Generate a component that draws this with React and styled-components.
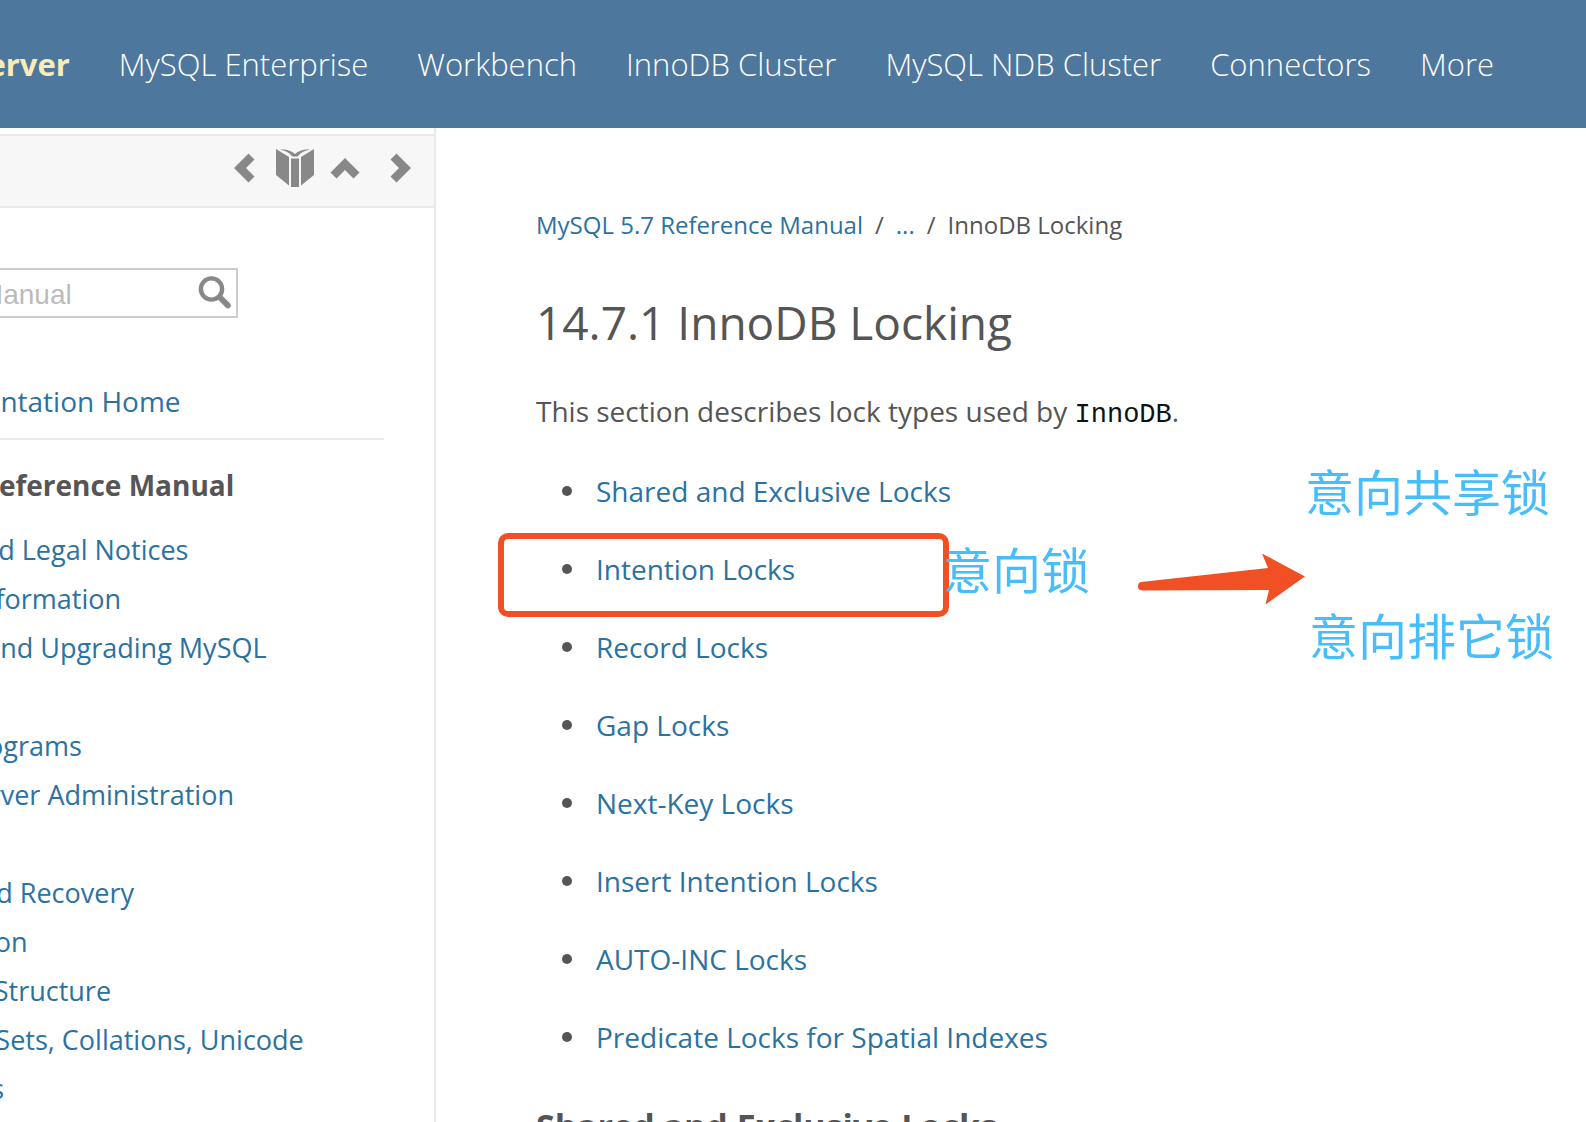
import React from 'react';
import styled, { createGlobalStyle } from 'styled-components';

const GlobalStyle = createGlobalStyle`
  * {
    box-sizing: border-box;
  }

  html {
    scrollbar-width: none;
  }

  body {
    margin: 0;
    overflow-x: hidden;
    background: #fff;
    color: #555;
    font-family: "Open Sans", "Noto Sans CJK SC", sans-serif;
    font-size: 28px;
  }

  a {
    color: #2b72a1;
    text-decoration: none;
  }
`;

const products = [
  'MySQL Enterprise',
  'Workbench',
  'InnoDB Cluster',
  'MySQL NDB Cluster',
  'Connectors',
  'More',
];

const chapters = [
  'Preface and Legal Notices',
  'General Information',
  'Installing and Upgrading MySQL',
  'Tutorial',
  'MySQL Programs',
  'MySQL Server Administration',
  'Security',
  'Backup and Recovery',
  'Optimization',
  'Language Structure',
  'Character Sets, Collations, Unicode',
  'Data Types',
];

const sections = [
  'Shared and Exclusive Locks',
  'Intention Locks',
  'Record Locks',
  'Gap Locks',
  'Next-Key Locks',
  'Insert Intention Locks',
  'AUTO-INC Locks',
  'Predicate Locks for Spatial Indexes',
];

const App = () => {
  return (
    <>
      <GlobalStyle />
      <TopNav>
        <NavLink href="#server" $active>MySQL Server</NavLink>
        {products.map((item) => (
          <NavLink href="#product" key={item}>{item}</NavLink>
        ))}
      </TopNav>
      <Layout>
        <Sidebar>
          <Toolbar>
            <IconLink href="#prev" aria-label="Previous">
              <svg width="21" height="30" viewBox="0 0 21 30">
                <path d="M14.5 0.5 20.5 6.5 12 15l8.500 8.500-6 6L0 15Z" />
              </svg>
            </IconLink>
            <IconLink href="#home" aria-label="Home" $space={5}>
              <svg width="38" height="38" viewBox="0 0 38 38">
                <path d="M0 0 13 8V36.500L0 26Z" />
                <path d="M38 0 25 8V36.500L38 26Z" />
                <path d="M15 9.500h8V38h-8Z" />
                <path d="M4 .800C9-.200 15 1.500 19 5c4-3.500 10-5.200 15-4.200C29 1.500 25 3.500 21.500 7.500h-5C13 3.500 9 1.500 4 .800Z" />
              </svg>
            </IconLink>
            <IconLink href="#up" aria-label="Up">
              <svg width="30" height="21" viewBox="0 0 30 21">
                <path d="M15 0 29.500 14.500l-6 6L15 12l-8.500 8.500-6-6Z" />
              </svg>
            </IconLink>
            <IconLink href="#next" aria-label="Next" $space={14}>
              <svg width="21" height="30" viewBox="0 0 21 30">
                <path d="M6.500 0.500 0.500 6.500 9 15l-8.500 8.500 6 6L21 15Z" />
              </svg>
            </IconLink>
          </Toolbar>
          <SidebarBody>
            <SearchForm>
              <SearchInput type="text" placeholder="Search this Manual" aria-label="Search this Manual" />
              <SearchButton type="submit" aria-label="Search">
                <svg width="34" height="34" viewBox="0 0 34 34" fill="none" stroke="#888">
                  <circle cx="13.500" cy="13" r="10.600" strokeWidth="4.400" />
                  <path d="M21.500 21 30 29.500" strokeWidth="6" />
                  <path d="M29 28.500 30 29.500" strokeWidth="5.600" strokeLinecap="round" />
                </svg>
              </SearchButton>
            </SearchForm>
            <HomeLink href="#docs">Documentation Home</HomeLink>
            <ManualTitle>MySQL 5.7 Reference Manual</ManualTitle>
            <ChapterList>
              {chapters.map((item) => (
                <li key={item}>
                  <a href="#chapter">{item}</a>
                </li>
              ))}
            </ChapterList>
          </SidebarBody>
        </Sidebar>
        <Content>
          <Breadcrumb aria-label="Breadcrumb">
            <a href="#manual">MySQL 5.7 Reference Manual</a>
            <span>/</span>
            <a href="#more">...</a>
            <span>/</span>
            <span>InnoDB Locking</span>
          </Breadcrumb>
          <Title>14.7.1 InnoDB Locking</Title>
          <Intro>
            This section describes lock types used by <Code>InnoDB</Code>.
          </Intro>
          <SectionList>
            {sections.map((item) => (
              <SectionItem key={item}>
                <a href="#section">{item}</a>
                {item === 'Intention Locks' && (
                  <>
                    <Highlight />
                    <Note $left={381} $top={-13}>意向锁</Note>
                    <Arrow width="168" height="52" viewBox="0 0 168 52">
                      <path d="M4 29 131 15 125 0.500 168 23.500 128.500 51.500 132 37 6 37.500Q1 37.500 1 33.500Q1 29.500 4 29Z" />
                    </Arrow>
                    <Note $left={743} $top={-91}>意向共享锁</Note>
                    <Note $left={747} $top={53}>意向排它锁</Note>
                  </>
                )}
              </SectionItem>
            ))}
          </SectionList>
          <Subtitle>Shared and Exclusive Locks</Subtitle>
        </Content>
      </Layout>
    </>
  );
};

const TopNav = styled.nav`
  display: flex;
  align-items: center;
  justify-content: flex-end;
  gap: 49px;
  height: 128px;
  padding-right: 92px;
  overflow: hidden;
  background: #4e779e;
`;

const NavLink = styled.a`
  flex: none;
  color: ${(props) => (props.$active ? '#fbecb5' : '#fff')};
  font-size: 31px;
  font-weight: ${(props) => (props.$active ? 700 : 300)};
  line-height: 44px;
`;

const Layout = styled.div`
  display: flex;
`;

const Sidebar = styled.aside`
  flex: none;
  width: 436px;
  padding-top: 6px;
  border-right: 2px solid #e9e9e9;
  overflow: hidden;
`;

const Toolbar = styled.div`
  display: flex;
  align-items: center;
  justify-content: flex-end;
  gap: 16px;
  height: 74px;
  padding: 0 23px 6px 0;
  border-top: 2px solid #e9e9e9;
  border-bottom: 2px solid #e9e9e9;
  background: #f7f7f7;
`;

const IconLink = styled.a`
  display: flex;
  margin-left: ${(props) => props.$space || 0}px;
  fill: #888;
`;

/* the left part of the sidebar runs off the edge of the window */
const SidebarBody = styled.div`
  margin-left: -170px;
  padding: 60px 50px 0 0;
`;

const SearchForm = styled.form`
  display: flex;
  align-items: center;
  width: 408px;
  height: 50px;
  border: 2px solid #ccc;
`;

const SearchInput = styled.input`
  flex: 1;
  min-width: 0;
  border: 0;
  padding: 3px 0 0;
  outline: 0;
  background: none;
  font-family: "Liberation Sans", Arial, sans-serif;
  font-size: 28px;

  &::placeholder {
    color: #bbb;
  }
`;

const SearchButton = styled.button`
  display: flex;
  padding: 0 4px;
  border: 0;
  background: none;
  cursor: pointer;
`;

const HomeLink = styled.a`
  display: block;
  padding: 59px 0 12px 61px;
  border-bottom: 2px solid #e9e9e9;
  line-height: 49px;
`;

const ManualTitle = styled.h2`
  margin: 0;
  padding: 21px 0 15px;
  font-size: 28px;
  font-weight: 700;
  line-height: 49px;
`;

const ChapterList = styled.ul`
  margin: 0;
  padding: 0 0 0 35px;
  list-style: none;
  font-size: 27px;
  line-height: 49px;
  white-space: nowrap;
`;

const Content = styled.main`
  flex: 1;
  min-width: 0;
  padding: 79px 30px 0 100px;
`;

const Breadcrumb = styled.nav`
  display: flex;
  gap: 12px;
  font-size: 24px;
  line-height: 36px;
`;

const Title = styled.h1`
  margin: 47px 0 0;
  font-size: 46px;
  font-weight: 400;
  line-height: 64px;
`;

const Intro = styled.p`
  margin: 33px 0 0;
  line-height: 48px;
`;

const Code = styled.code`
  color: #111;
  font-family: "Liberation Mono", "Courier New", monospace;
  font-size: 27px;
`;

const SectionList = styled.ul`
  display: flex;
  flex-direction: column;
  gap: 30px;
  margin: 28px 0 0;
  padding: 0 0 0 26px;
  list-style: none;
  line-height: 48px;
`;

const SectionItem = styled.li`
  position: relative;
  display: flex;
  align-items: center;
  gap: 24px;

  &::before {
    content: "";
    width: 10px;
    height: 10px;
    border-radius: 50%;
    background: #555;
  }
`;

/* annotations drawn over the article */
const Highlight = styled.div`
  position: absolute;
  top: -12px;
  left: -64px;
  width: 451px;
  height: 84px;
  border: 6px solid #f05023;
  border-radius: 10px;
  pointer-events: none;
`;

const Note = styled.span`
  position: absolute;
  top: ${(props) => props.$top}px;
  left: ${(props) => props.$left}px;
  color: #48bdfb;
  font-family: "Noto Sans CJK SC", sans-serif;
  font-size: 49px;
  font-weight: 400;
  line-height: 72px;
  white-space: nowrap;
`;

const Arrow = styled.svg`
  position: absolute;
  top: 8px;
  left: 575px;
  fill: #f05023;
`;

const Subtitle = styled.h3`
  margin: 41px 0 0;
  font-size: 34px;
  font-weight: 700;
  line-height: 48px;
`;

export default App;
